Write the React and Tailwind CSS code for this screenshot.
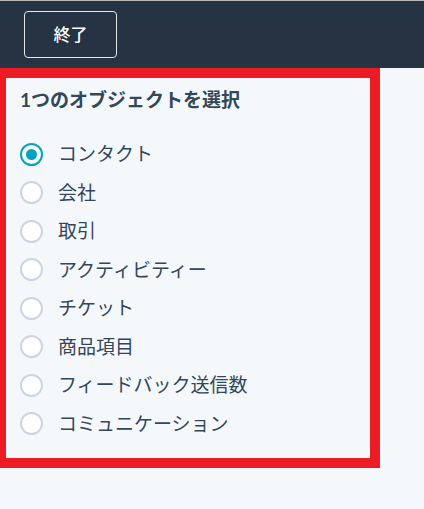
import React, { useState } from "react";

const OBJECTS = [
  "コンタクト",
  "会社",
  "取引",
  "アクティビティー",
  "チケット",
  "商品項目",
  "フィードバック送信数",
  "コミュニケーション",
];

const Radio = ({ checked }) => (
  <span
    className={
      checked
        ? "flex items-center justify-center w-[23px] h-[23px] rounded-full border-2 border-[#00a4bd] bg-white"
        : "flex items-center justify-center w-[23px] h-[23px] rounded-full border-2 border-[#cbd6e2] bg-white"
    }
  >
    {checked && <span className="w-[11px] h-[11px] rounded-full bg-[#00a4bd]" />}
  </span>
);

const App = () => {
  const [selected, setSelected] = useState(0);

  return (
    <div className="min-h-screen bg-[#f5f8fa] font-['Lato','Noto_Sans_CJK_JP',sans-serif]">
      <div className="h-[68px] border-t border-[#bab6b4] bg-[#253342] flex items-start pl-[24px] pt-[10px]">
        <button className="w-[93px] h-[47px] rounded-[4px] border border-[#e5e8eb] text-white text-[17px] font-medium">
          終了
        </button>
      </div>

      <div className="w-[380px] border-[10px] border-l-[6px] border-[#ed1c24] bg-[#f5f8fa] pl-[14px] pt-[10px] pb-[15px]">
        <div className="text-[19px] leading-[24px] font-bold text-[#33475b]">
          1つのオブジェクトを選択
        </div>
        <ul className="mt-[23px]">
          {OBJECTS.map((name, i) => (
            <li
              key={name}
              onClick={() => setSelected(i)}
              className="h-[38.5px] flex items-center gap-[15px] cursor-pointer"
            >
              <Radio checked={selected === i} />
              <span className="text-[19px] font-normal text-[#33475b]">{name}</span>
            </li>
          ))}
        </ul>
      </div>
    </div>
  );
};

export default App;
